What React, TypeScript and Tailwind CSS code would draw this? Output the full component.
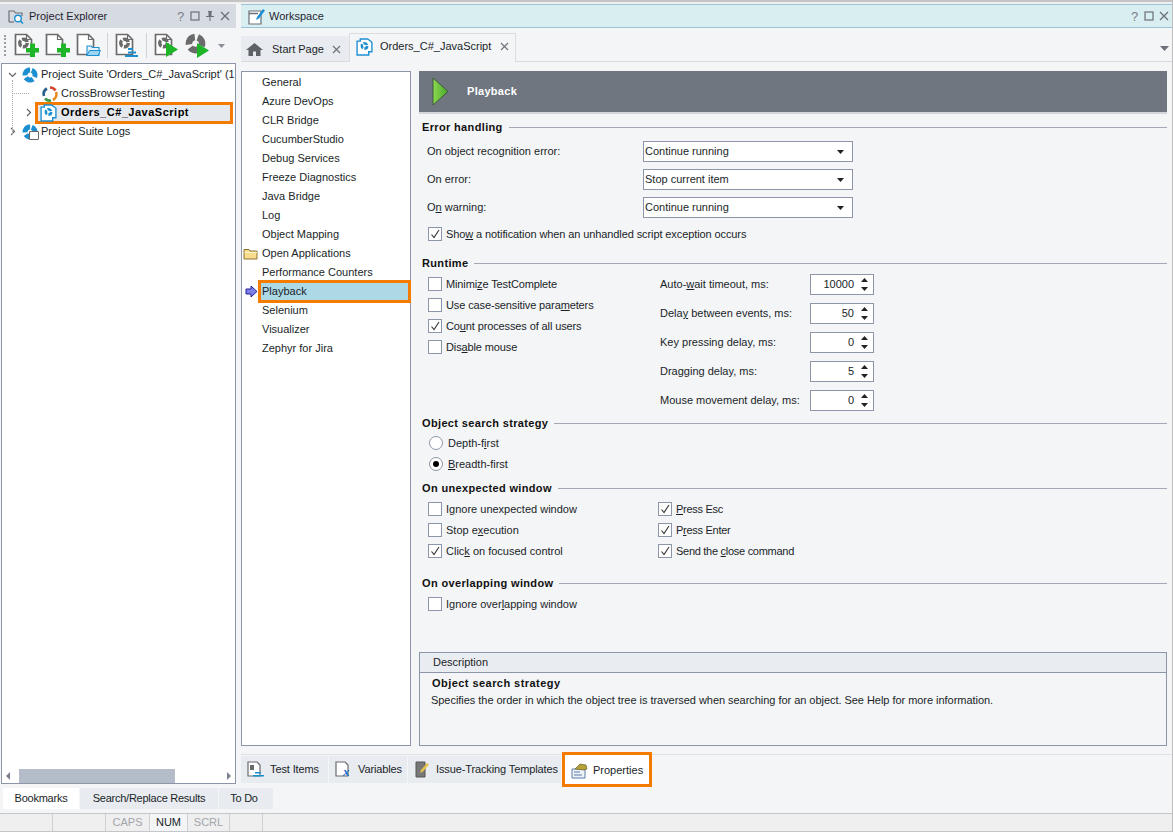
import type { ReactNode } from 'react'

const G = '#6b6b6b'

function PageIcon({ blob = false, plus = false, folder = false, lines = false, play = false }: { blob?: boolean; plus?: boolean; folder?: boolean; lines?: boolean; play?: boolean }) {
  return (
    <svg width="25" height="25" viewBox="0 0 25 25" className="shrink-0">
      <path d="M1.500 1.500h11l5 5v15h-16z" fill="#fff" stroke={G} strokeWidth="1.700" />
      <path d="M12.500 1.500v5h5" fill="none" stroke={G} strokeWidth="1.200" />
      {blob && (
        <circle cx="9.500" cy="10" r="3.800" fill="none" stroke={G} strokeWidth="3.400" strokeDasharray="6.500 1.460" />
      )}
      {plus && <path d="M16 10.500h5V15h4v4.500h-4V24h-5v-4.500h-4V15h4z" fill="#1eb529" />}
      {folder && (
        <g>
          <path d="M11 13h4l1.500 1.500H23v8H11z" fill="#e6f3fb" stroke="#1c8fd1" strokeWidth="1.100" />
          <path d="M11 22.500l2.500-5H24.500l-2.500 5z" fill="#9fd4f2" stroke="#1c8fd1" strokeWidth="1" />
        </g>
      )}
      {lines && <path d="M13 15h5v2h-5zM13 18.500h8v2h-8zM10 22h13v2H10z" fill="#1c8fd1" />}
      {play && <path d="M12 9l12 7.500L12 24z" fill="#1eb529" />}
    </svg>
  )
}

function Pinwheel({ color = '#1c8fd1', size = 16 }: { color?: string; size?: number }) {
  return (
    <svg width={size} height={size} viewBox="0 0 16 16" className="shrink-0">
      <circle cx="8" cy="8" r="5" fill="none" stroke={color} strokeWidth="5" strokeDasharray="8 2.470" transform="rotate(-70 8 8)" />
    </svg>
  )
}

function ProjectIcon() {
  return (
    <svg width="17" height="18" viewBox="0 0 16 17" className="shrink-0">
      <path d="M1 3h3V1h7l4 3v9h-3v3H1z" fill="#fff" stroke="#1c8fd1" strokeWidth="1.300" />
      <circle cx="8" cy="7.500" r="2.500" fill="none" stroke="#1c8fd1" strokeWidth="2.400" strokeDasharray="4 1.240" />
    </svg>
  )
}

function Caret({ open = false }: { open?: boolean }) {
  return (
    <svg width="9" height="9" viewBox="0 0 9 9" className="shrink-0">
      <path d={open ? 'M1 3l3.500 3.500L8 3' : 'M3 1l3.500 3.500L3 8'} fill="none" stroke="#666" strokeWidth="1.200" />
    </svg>
  )
}

function WindowButtons({ pin = false }: { pin?: boolean }) {
  return (
    <div className="flex items-center gap-[5px] text-[#6b7078]">
      <span className="w-[9px] text-center text-[13px] leading-none text-[#7c8088]">?</span>
      <svg width="10" height="10" viewBox="0 0 10 10"><rect x="1" y="1" width="8" height="8" fill="none" stroke="currentColor" strokeWidth="1.200" /></svg>
      {pin && (
        <svg width="10" height="10" viewBox="0 0 10 10"><path d="M3 0h4v1H6.500v4H9v1H5.500v4h-1V6H1V5h2.500V1H3z" fill="currentColor" /></svg>
      )}
      <svg width="10" height="10" viewBox="0 0 10 10"><path d="M1 1l8 8M9 1l-8 8" stroke="currentColor" strokeWidth="1.300" /></svg>
    </div>
  )
}

function ToolSep() {
  return <div className="h-[25px] w-px bg-[#cfd2d8]" />
}

function TreeRow({ pad, children }: { pad: number; children: ReactNode }) {
  return (
    <div className="flex h-[19px] items-center whitespace-nowrap" style={{ paddingLeft: pad }}>
      {children}
    </div>
  )
}

function LeftPanel() {
  return (
    <div className="flex h-[805px] w-[236px] shrink-0 flex-col">
      <div className="flex h-[24px] shrink-0 items-center bg-[#d6dae1] pl-[8px] pr-[6px]">
        <svg width="16" height="15" viewBox="0 0 16 15" className="mr-[5px] shrink-0">
          <path d="M1 13V2h5l1.500 2H14v3" fill="none" stroke="#6b7078" strokeWidth="1.200" />
          <path d="M1 13h5" stroke="#6b7078" strokeWidth="1.200" />
          <circle cx="10" cy="9.500" r="3.300" fill="#fff" stroke="#1c8fd1" strokeWidth="1.400" />
          <path d="M12.500 12l2.500 2.500" stroke="#1c8fd1" strokeWidth="1.600" />
        </svg>
        <span className="flex-1 text-[#1f2430]">Project Explorer</span>
        <WindowButtons pin />
      </div>
      <div className="flex h-[35px] shrink-0 items-center pl-[4px]">
        <div className="mr-[8px] h-[21px] w-[2px] border-l-2 border-dotted border-[#9a9ea6]" />
        <div className="flex items-center gap-[6px]">
          <PageIcon blob plus />
          <PageIcon plus />
          <PageIcon folder />
        </div>
        <div className="ml-[6px] mr-[7px]"><ToolSep /></div>
        <PageIcon blob lines />
        <div className="ml-[6px] mr-[7px]"><ToolSep /></div>
        <div className="flex items-center gap-[6px]">
          <PageIcon blob play />
          <div className="relative h-[25px] w-[25px]">
            <Pinwheel color={G} size={21} />
            <svg width="14" height="16" viewBox="0 0 14 16" className="absolute bottom-0 right-0"><path d="M1 1l12 7.500L1 16z" fill="#1eb529" /></svg>
          </div>
        </div>
        <svg width="7" height="4" viewBox="0 0 7 4" className="ml-[8px]"><path d="M0 0h7L3.500 4z" fill="#8a8e96" /></svg>
      </div>
      <div className="relative ml-[1px] flex h-[721px] w-[235px] shrink-0 flex-col border border-[#8c96a8] bg-white pt-[1px]">
        <TreeRow pad={6}>
          <Caret open />
          <span className="ml-[5px] mr-[3px]"><Pinwheel /></span>
          <span className="overflow-hidden text-[#1a1f28]">Project Suite 'Orders_C#_JavaScript' (1</span>
        </TreeRow>
        <TreeRow pad={40}>
          <svg width="16" height="16" viewBox="0 0 16 16" className="mr-[3px] shrink-0">
            <path d="M8 1.500a6.500 6.500 0 0 1 5.500 3" fill="none" stroke="#d1432f" strokeWidth="2.600" />
            <path d="M14 6a6.500 6.500 0 0 1-3 8" fill="none" stroke="#e98a1f" strokeWidth="2.600" />
            <path d="M9 14.500a6.500 6.500 0 0 1-6-2" fill="none" stroke="#3d9a48" strokeWidth="2.600" />
            <path d="M2 10a6.500 6.500 0 0 1 3-7.500" fill="none" stroke="#2b5f8e" strokeWidth="2.600" />
          </svg>
          <span className="text-[#1a1f28]">CrossBrowserTesting</span>
        </TreeRow>
        <div className="relative flex h-[19px] items-center whitespace-nowrap pl-[22px]">
          <Caret />
          <div className="absolute bottom-[-1.500px] left-[33px] right-[2px] top-[-1.500px] border-[3px] border-[#f47b00] bg-[#e5e8ed]" />
          <span className="relative ml-[7px] mr-[4px]"><ProjectIcon /></span>
          <span className="relative font-bold tracking-[0.5px] text-black">Orders_C#_JavaScript</span>
        </div>
        <TreeRow pad={6}>
          <Caret />
          <span className="relative ml-[5px] mr-[3px]">
            <Pinwheel />
            <span className="absolute bottom-0 right-[-1px] h-[9px] w-[10px] rounded-[1px] border border-[#666] bg-white" />
          </span>
          <span className="text-[#1a1f28]">Project Suite Logs</span>
        </TreeRow>
        <div className="pointer-events-none absolute left-[10px] top-[16px] h-[54px] border-l border-dotted border-[#aaa]" />
        <div className="pointer-events-none absolute left-[10px] top-[29px] w-[17px] border-t border-dotted border-[#aaa]" />
        <div className="mt-auto flex h-[14px] items-center px-[4px]">
          <svg width="4" height="8" viewBox="0 0 4 8"><path d="M4 0v8L0 4z" fill="#7c828c" /></svg>
          <div className="ml-[9px] h-[14px] w-[156px] bg-[#b4bbc9]" />
          <div className="flex-1" />
          <svg width="4" height="8" viewBox="0 0 4 8"><path d="M0 0v8l4-4z" fill="#7c828c" /></svg>
        </div>
      </div>
      <div className="mt-[4px] flex h-[21px] w-[273px] shrink-0 pl-[3px] tracking-[-0.25px]">
        <div className="flex w-[76px] shrink-0 items-center justify-center bg-white text-[#1a1f28]">Bookmarks</div>
        <div className="ml-px flex w-[138px] shrink-0 items-center justify-center bg-[#e8ebf0] text-[#1a1f28]">Search/Replace Results</div>
        <div className="ml-px flex w-[54px] shrink-0 items-center justify-center bg-[#e8ebf0] pr-[4px] text-[#1a1f28]">To Do</div>
      </div>
    </div>
  )
}

const OPTION_PAGES = ['General', 'Azure DevOps', 'CLR Bridge', 'CucumberStudio', 'Debug Services', 'Freeze Diagnostics', 'Java Bridge', 'Log', 'Object Mapping', 'Open Applications', 'Performance Counters', 'Playback', 'Selenium', 'Visualizer', 'Zephyr for Jira']

function OptionList() {
  return (
    <div className="h-[675px] w-[170px] shrink-0 border border-[#8c96a8] bg-white pt-px">
      {OPTION_PAGES.map((name) => {
        if (name === 'Playback') {
          return (
            <div key={name} className="relative flex h-[19px] items-center">
              <svg width="13" height="13" viewBox="0 0 13 13" className="absolute left-[3px]">
                <path d="M1 4h5V1l6 5.500L6 12V9H1z" fill="#7f7fe8" stroke="#23239b" strokeWidth="1" />
              </svg>
              <div className="ml-[18px] mr-[1px] flex h-[19px] flex-1 items-center bg-[#add8e6] pl-[2px] text-[#1a1f28] outline-[3px] outline-offset-[-1px] outline-[#f47b00] outline-solid">
                {name}
              </div>
            </div>
          )
        }
        return (
          <div key={name} className="relative flex h-[19px] items-center pl-[20px] text-[#1a1f28]">
            {name === 'Open Applications' && (
              <svg width="16" height="13" viewBox="0 0 16 13" className="absolute left-[1px]">
                <path d="M1 2.500h5l1 1.500h7v8H1z" fill="#f6dc8c" stroke="#8c7430" strokeWidth="1" />
                <path d="M1.500 5.500h12.500" stroke="#fff3c8" strokeWidth="1" />
              </svg>
            )}
            {name}
          </div>
        )
      })}
    </div>
  )
}

function Heading({ children }: { children: ReactNode }) {
  return (
    <div className="flex h-[16px] items-center gap-[6px] pl-[3px]">
      <span className="whitespace-nowrap font-bold tracking-[0.35px] text-[#111]">{children}</span>
      <div className="h-px flex-1 bg-[#a3a8b4]" />
    </div>
  )
}

function Check({ on = false, children }: { on?: boolean; children: ReactNode }) {
  return (
    <div className="flex h-[16px] items-center gap-[4px] whitespace-nowrap text-[#1a1f28]">
      <span className="flex h-[14px] w-[14px] shrink-0 items-center justify-center border border-[#8c96a8] bg-white">
        {on && (
          <svg width="10" height="10" viewBox="0 0 10 10"><path d="M1.500 5.500l2.500 3L9 1" fill="none" stroke="#333" strokeWidth="1.100" /></svg>
        )}
      </span>
      <span>{children}</span>
    </div>
  )
}

function Radio({ on = false, children }: { on?: boolean; children: ReactNode }) {
  return (
    <div className="flex h-[16px] items-center gap-[5px] whitespace-nowrap pl-[1px] text-[#1a1f28]">
      <span className="flex h-[14px] w-[14px] shrink-0 items-center justify-center rounded-full border border-[#8c96a8] bg-white">
        {on && <span className="h-[6px] w-[6px] rounded-full bg-black" />}
      </span>
      <span>{children}</span>
    </div>
  )
}

function ComboRow({ label, value }: { label: ReactNode; value: string }) {
  return (
    <div className="flex h-[21px] items-center pl-[8px] text-[#1a1f28]">
      <div className="w-[216px]">{label}</div>
      <div className="flex h-[21px] w-[210px] items-center justify-between border border-[#8c96a8] bg-white pl-[1px] pr-[8px]">
        {value}
        <svg width="7" height="4" viewBox="0 0 7 4"><path d="M0 0h7L3.500 4z" fill="#222" /></svg>
      </div>
    </div>
  )
}

function Spin({ label, value }: { label: ReactNode; value: string }) {
  return (
    <div className="flex h-[21px] items-center text-[#1a1f28]">
      <div className="w-[150px] whitespace-nowrap">{label}</div>
      <div className="flex h-[21px] w-[64px] items-center justify-end border border-[#8c96a8] bg-white pr-[5px]">
        {value}
        <svg width="7" height="13" viewBox="0 0 7 13" className="ml-[7px]"><path d="M0 4l3.500-4L7 4zM0 9h7l-3.500 4z" fill="#222" /></svg>
      </div>
    </div>
  )
}

function PlaybackForm() {
  return (
    <div className="flex h-[675px] min-w-0 flex-1 flex-col">
      <div className="flex h-[43px] shrink-0 items-center border-b-2 border-[#d3d6db] bg-[#6f7680] pl-[13px]">
        <svg width="18" height="29" viewBox="0 0 18 29">
          <defs>
            <linearGradient id="pb" x1="0" x2="1" y1="0" y2="0">
              <stop offset="0" stopColor="#8bd94f" />
              <stop offset="1" stopColor="#4aa82c" />
            </linearGradient>
          </defs>
          <path d="M1 1l15 13.500L1 28z" fill="url(#pb)" stroke="#3f5a3a" strokeWidth="1" />
        </svg>
        <span className="ml-[17px] font-bold tracking-[0.3px] text-white">Playback</span>
      </div>

      <div className="mt-[5px]"><Heading>Error handling</Heading></div>
      <div className="mt-[6px] flex flex-col gap-[7px]">
        <ComboRow label={<>On ob<u>j</u>ect recognition error:</>} value="Continue running" />
        <ComboRow label="On error:" value="Stop current item" />
        <ComboRow label={<>O<u>n</u> warning:</>} value="Continue running" />
      </div>
      <div className="mt-[8px] pl-[9px] tracking-[-0.1px]">
        <Check on>Sho<u>w</u> a notification when an unhandled script exception occurs</Check>
      </div>

      <div className="mt-[13px]"><Heading>Runtime</Heading></div>
      <div className="mt-[3px] flex">
        <div className="flex w-[241px] flex-col gap-[5px] pl-[9px] pt-[2px] tracking-[-0.12px]">
          <Check>Minimi<u>z</u>e TestComplete</Check>
          <Check>Use case-sensitive para<u>m</u>eters</Check>
          <Check on>Co<u>u</u>nt processes of all users</Check>
          <Check>Dis<u>a</u>ble mouse</Check>
        </div>
        <div className="flex flex-col gap-[8px]">
          <Spin label={<>Auto-<u>w</u>ait timeout, ms:</>} value="10000" />
          <Spin label={<>Dela<u>y</u> between events, ms:</>} value="50" />
          <Spin label="Key pressing delay, ms:" value="0" />
          <Spin label="Dragging delay, ms:" value="5" />
          <Spin label="Mouse movement delay, ms:" value="0" />
        </div>
      </div>

      <div className="mt-[4px]"><Heading>Object search strategy</Heading></div>
      <div className="mt-[4px] flex flex-col gap-[5px] pl-[9px]">
        <Radio>Depth-f<u>i</u>rst</Radio>
        <Radio on><u>B</u>readth-first</Radio>
      </div>

      <div className="mt-[8px]"><Heading>On unexpected window</Heading></div>
      <div className="mt-[5px] flex">
        <div className="flex w-[239px] flex-col gap-[5px] pl-[9px]">
          <Check>I<u>g</u>nore unexpected window</Check>
          <Check>Stop e<u>x</u>ecution</Check>
          <Check on>Clic<u>k</u> on focused control</Check>
        </div>
        <div className="flex flex-col gap-[5px] tracking-[-0.28px]">
          <Check on><u>P</u>ress Esc</Check>
          <Check on>P<u>r</u>ess Enter</Check>
          <Check on>Send the <u>c</u>lose command</Check>
        </div>
      </div>

      <div className="mt-[16px]"><Heading>On overlapping window</Heading></div>
      <div className="mt-[5px] pl-[9px]">
        <Check>Ignore over<u>l</u>apping window</Check>
      </div>

      <div className="mt-auto flex h-[94px] shrink-0 flex-col border border-[#8c96a8]">
        <div className="flex h-[20px] shrink-0 items-center border-b border-[#8c96a8] bg-[#e9ecf1] pl-[13px] text-[#1a1f28]">Description</div>
        <div className="pl-[12px] pt-[5px] font-bold tracking-[0.45px] text-[#111]">Object search strategy</div>
        <div className="pl-[11px] pt-[6px] tracking-[-0.04px] text-[#1a1f28]">Specifies the order in which the object tree is traversed when searching for an object. See Help for more information.</div>
      </div>
    </div>
  )
}

function BottomTab({ width, icon, children }: { width: number; icon: ReactNode; children: ReactNode }) {
  return (
    <div className="mr-px flex h-[27px] items-center gap-[5px] bg-[#e8ebf0] pl-[6px] tracking-[-0.12px] text-[#1a1f28]" style={{ width }}>
      {icon}
      <span className="whitespace-nowrap">{children}</span>
    </div>
  )
}

function SmallDoc({ children }: { children: ReactNode }) {
  return (
    <svg width="18" height="18" viewBox="0 0 18 18" className="shrink-0">
      <path d="M1 1h9l3 3v11H1z" fill="#fff" stroke={G} strokeWidth="1.200" />
      {children}
    </svg>
  )
}

function Workspace() {
  return (
    <div className="ml-[5px] flex h-[783px] min-w-0 flex-1 flex-col">
      <div className="flex h-[24px] shrink-0 items-center border-y border-[#9cc4d8] bg-[#d9eef0] pl-[7px] pr-[3px]">
        <svg width="18" height="17" viewBox="0 0 18 17" className="mr-[3px] shrink-0">
          <path d="M1 3h12v13H1z" fill="#fff" stroke="#6b7078" strokeWidth="1.200" />
          <path d="M1 5.500h9" stroke="#6b7078" strokeWidth="1.500" />
          <path d="M8 12l1-3 6-8 2 1.500-6 8z" fill="#1c8fd1" />
        </svg>
        <span className="flex-1 text-[#1f2430]">Workspace</span>
        <WindowButtons />
      </div>

      <div className="relative flex h-[34px] shrink-0 items-end pt-[5px]">
        <div className="absolute bottom-0 left-0 right-0 h-px bg-[#d8dadd]" />
        <div className="flex h-[26px] w-[108px] items-center bg-[#e8ebf0] pl-[5px] text-[#1a1f28]">
          <svg width="17" height="15" viewBox="0 0 17 15" className="mr-[9px] shrink-0"><path d="M8.500 1L0 8h2.500v6h4.500V9.500h3V14h4.500V8H17z" fill="#5d6168" /></svg>
          Start Page
          <svg width="9" height="9" viewBox="0 0 9 9" className="ml-[8px]"><path d="M1 1l7 7M8 1L1 8" stroke="#6b7078" strokeWidth="1.100" /></svg>
        </div>
        <div className="relative flex h-[29px] w-[167px] items-center border-x border-t border-[#dcdde0] bg-[#f4f5f7] pb-[3px] pl-[6px] text-[#1a1f28]">
          <ProjectIcon />
          <span className="ml-[7px] whitespace-nowrap">Orders_C#_JavaScript</span>
          <svg width="9" height="9" viewBox="0 0 9 9" className="ml-[9px]"><path d="M1 1l7 7M8 1L1 8" stroke="#6b7078" strokeWidth="1.100" /></svg>
        </div>
        <svg width="9" height="5" viewBox="0 0 9 5" className="absolute right-[3px] top-[18px]"><path d="M0 0h9L4.500 5z" fill="#6b7078" /></svg>
      </div>

      <div className="mt-[9px] flex shrink-0 gap-[8px] pr-[5px]">
        <OptionList />
        <PlaybackForm />
      </div>

      <div className="mt-[8px] flex h-[32px] shrink-0 items-start border-t border-[#dfe1e5]">
        <div className="flex pt-[1px]">
          <BottomTab width={87} icon={<SmallDoc><path d="M3 4h4v5H3z" fill={G} /><path d="M8 11h6v1.500H8zM6 14h11v1.500H6z" fill="#1c8fd1" /></SmallDoc>}>Test Items</BottomTab>
          <BottomTab width={78} icon={<SmallDoc><text x="8" y="15" fontFamily="'Liberation Serif', serif" fontStyle="italic" fontWeight="700" fontSize="13" fill="#1c6fd1">x</text></SmallDoc>}>Variables</BottomTab>
          <BottomTab width={153} icon={<svg width="17" height="17" viewBox="0 0 17 17" className="shrink-0"><path d="M2 1h9v15H2z" fill="#777" stroke="#555" /><path d="M6 12l1-3 6-7 2 1.500-6 7z" fill="#e8c24a" /></svg>}>Issue-Tracking Templates</BottomTab>
        </div>
        <div className="relative -mt-[3px] flex h-[35px] w-[90px] shrink-0 items-center gap-[5px] border-[3px] border-[#f47b00] bg-white pl-[6px] pt-[2px] text-[#1a1f28]">
          <svg width="17" height="16" viewBox="0 0 17 16" className="shrink-0">
            <path d="M1 6h13v9H1z" fill="#eef3fa" stroke="#5b7aa8" />
            <path d="M3 9h6M3 12h8" stroke="#5b7aa8" />
            <path d="M4 6l5-5 6 1 1 4-3 1z" fill="#b8a03a" stroke="#6d6320" strokeWidth="0.700" />
          </svg>
          Properties
        </div>
      </div>
    </div>
  )
}

const STATUS_CELLS = [
  { w: 53, t: '' },
  { w: 53, t: '' },
  { w: 44, t: 'CAPS' },
  { w: 38, t: 'NUM', on: true },
  { w: 42, t: 'SCRL' },
  { w: 33, t: '' },
]

export default function App() {
  return (
    <div className="flex h-[832px] w-[1173px] flex-col overflow-hidden border-r border-[#bdbdbd] bg-[#f4f5f7] font-['Liberation_Sans',sans-serif] text-[11px] leading-none">
      <div className="h-[4px] shrink-0 border-t-2 border-[#c4c4c4] bg-[#f0f0f0]" />
      <div className="flex min-h-0 flex-1">
        <LeftPanel />
        <Workspace />
      </div>
      <div className="flex h-[19px] shrink-0 border-y border-[#c4c6ca] bg-[#efeff0]">
        {STATUS_CELLS.map((c, i) => (
          <div key={i} className={`flex items-center justify-center border-r border-[#cfd0d3] ${c.on ? 'bg-[#f4f5f7] text-[#1a1f28]' : 'text-[#a2a5aa]'}`} style={{ width: c.w }}>
            {c.t}
          </div>
        ))}
      </div>
    </div>
  )
}
